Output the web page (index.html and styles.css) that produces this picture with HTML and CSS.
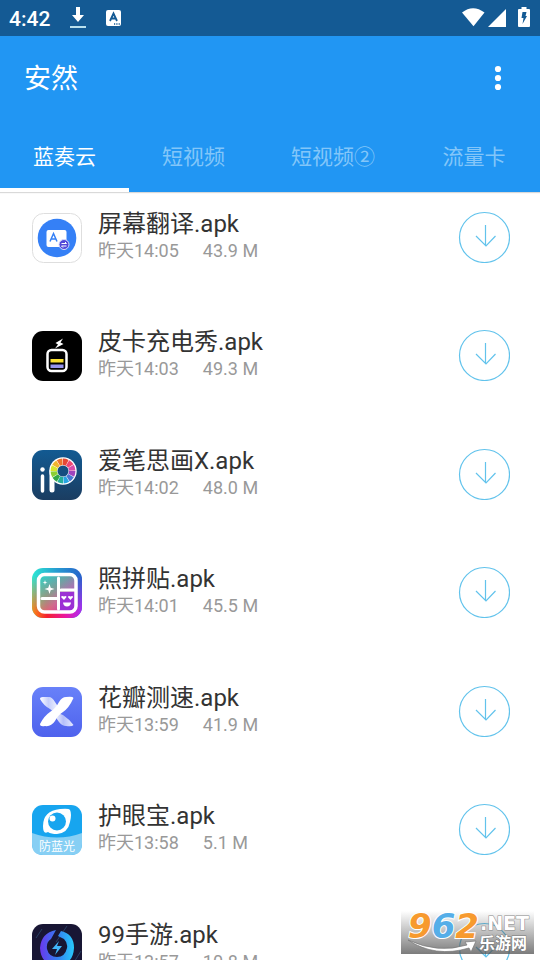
FILE: index.html
```html
<!DOCTYPE html>
<html lang="zh-CN">
<head>
<meta charset="utf-8">
<meta name="viewport" content="width=device-width, initial-scale=1">
<title>安然</title>
<link rel="stylesheet" href="styles.css">
</head>
<body>
<svg class="defs" aria-hidden="true">
  <symbol id="download" viewBox="0 0 52 52">
    <circle cx="26.500" cy="26.500" r="25" fill="none" stroke="#62c3ec" stroke-width="1.2"/>
    <path d="M27.500 14V34.500M18 25L28 35L37.500 25" fill="none" stroke="#62c3ec" stroke-width="1.200"/>
  </symbol>
</svg>
<div class="status">
  <div class="status-group">
    <span class="clock">4:42</span>
    <svg width="16" height="22" viewBox="0 0 16 22"><path d="M6 0h4v8h4l-6 7-6-7h4z" fill="#fff"/><path d="M0 19h16v2H0z" fill="#b9e0ee"/></svg>
    <svg width="16" height="16" viewBox="0 0 16 16"><rect width="15" height="16" rx="2" fill="#fff"/><path d="M4 11L7.500 3.500L11 11M5.300 8.500h4.500" fill="none" stroke="#145a94" stroke-width="1.800"/><path d="M8 14h1.200M10.300 14h1.200M12.600 14h1.200" stroke="#145a94" stroke-width="1.300"/></svg>
  </div>
  <div class="status-group status-right">
    <svg width="44" height="20" viewBox="0 0 44 20"><path d="M0 5.500Q11-3 22.500 5.500L11.500 19.300Z" fill="#fff"/><path d="M44 2V20H26z" fill="#fff"/></svg>
    <svg width="12" height="20" viewBox="0 0 12 20"><path d="M3.500 0h5v2H11q1 0 1 1v16q0 1-1 1H1q-1 0-1-1V3q0-1 1-1h2.500z" fill="#fff"/><path d="M4.500 5h4L7.500 9H9l-4.500 8 1-6H3.500z" fill="#145a94"/></svg>
  </div>
</div>
<header class="appbar">
  <div class="toolbar">
    <h1>安然</h1>
    <button class="more" type="button" aria-label="更多"><svg width="8" height="26" viewBox="0 0 8 26" fill="#fff"><circle cx="4" cy="4" r="3.100"/><circle cx="4" cy="13" r="3.100"/><circle cx="4" cy="22" r="3.100"/></svg></button>
  </div>
  <nav class="tabs">
    <a class="tab active" href="#">蓝奏云</a>
    <a class="tab" href="#">短视频</a>
    <a class="tab" href="#">短视频②</a>
    <a class="tab" href="#">流量卡</a>
  </nav>
</header>
<main class="content">
<ul class="files">
  <li class="file">
    <svg class="icon" viewBox="0 0 50 50"><rect x=".5" y=".5" width="49" height="49" rx="11" fill="#fff" stroke="#dedede"/><circle cx="25" cy="25" r="19.300" fill="#3580f6"/><rect x="14.500" y="17" width="20" height="17" rx="2" fill="#fff"/><path d="M18 28.500L21.500 20.500L25 28.500M19.200 26h4.600" fill="none" stroke="#3580f6" stroke-width="1.500"/><circle cx="32" cy="31.500" r="5" fill="#5148d8" stroke="#d8dcff"/><path d="M29.500 30.500h5l-1.500-1.500M34.500 33h-5l1.500 1.500" fill="none" stroke="#fff"/></svg>
    <div class="info"><h2>屏幕翻译.apk</h2><p><span>昨天14:05</span><span>43.9 M</span></p></div>
    <button class="get" type="button" aria-label="下载"><svg><use href="#download"/></svg></button>
  </li>
  <li class="file">
    <svg class="icon" viewBox="0 0 50 50"><rect width="50" height="50" rx="11" fill="#000"/><path d="M31 7.500L23.500 12L26 13.500L23 17.500L31.500 13L28.500 11.500Z" fill="#fff"/><rect x="15.500" y="19" width="19" height="21" rx="4" fill="none" stroke="#fff" stroke-width="2.500"/><path d="M18.500 28h13v3.500h-13z" fill="#f9df31"/><path d="M18.500 33.500h13V37h-13z" fill="#9694ef"/></svg>
    <div class="info"><h2>皮卡充电秀.apk</h2><p><span>昨天14:03</span><span>49.3 M</span></p></div>
    <button class="get" type="button" aria-label="下载"><svg><use href="#download"/></svg></button>
  </li>
  <li class="file">
    <svg class="icon" viewBox="0 0 50 50"><defs><linearGradient id="ink" x2="0" y2="1"><stop stop-color="#125a92"/><stop offset="1" stop-color="#1b3d61"/></linearGradient></defs><rect width="50" height="50" rx="11" fill="url(#ink)"/><path d="M10.500 26V41" stroke="#fff" stroke-width="3.500" stroke-linecap="round"/><path d="M20 21V40" stroke="#fff" stroke-width="5" stroke-linecap="round"/><circle cx="10.500" cy="19.500" r="2.200" fill="#fff"/><circle cx="31" cy="21" r="13.700" fill="#fff"/>
      <g fill="none" stroke-width="6.500" transform="rotate(-90 31 21)"><circle cx="31" cy="21" r="9.200" stroke="#e64835" pathLength="12" stroke-dasharray=".9 11.1"/><circle cx="31" cy="21" r="9.200" stroke="#ee4773" pathLength="12" stroke-dasharray=".9 11.1" stroke-dashoffset="-1"/><circle cx="31" cy="21" r="9.200" stroke="#d94ba9" pathLength="12" stroke-dasharray=".9 11.1" stroke-dashoffset="-2"/><circle cx="31" cy="21" r="9.200" stroke="#9e45bd" pathLength="12" stroke-dasharray=".9 11.1" stroke-dashoffset="-3"/><circle cx="31" cy="21" r="9.200" stroke="#4876d2" pathLength="12" stroke-dasharray=".9 11.1" stroke-dashoffset="-4"/><circle cx="31" cy="21" r="9.200" stroke="#26a5e2" pathLength="12" stroke-dasharray=".9 11.1" stroke-dashoffset="-5"/><circle cx="31" cy="21" r="9.200" stroke="#26af9b" pathLength="12" stroke-dasharray=".9 11.1" stroke-dashoffset="-6"/><circle cx="31" cy="21" r="9.200" stroke="#32a845" pathLength="12" stroke-dasharray=".9 11.1" stroke-dashoffset="-7"/><circle cx="31" cy="21" r="9.200" stroke="#8bcf35" pathLength="12" stroke-dasharray=".9 11.1" stroke-dashoffset="-8"/><circle cx="31" cy="21" r="9.200" stroke="#d8e62d" pathLength="12" stroke-dasharray=".9 11.1" stroke-dashoffset="-9"/><circle cx="31" cy="21" r="9.200" stroke="#f1b52d" pathLength="12" stroke-dasharray=".9 11.1" stroke-dashoffset="-10"/><circle cx="31" cy="21" r="9.200" stroke="#ed742d" pathLength="12" stroke-dasharray=".9 11.1" stroke-dashoffset="-11"/></g><circle cx="31" cy="21" r="5.500" fill="#154e80"/></svg>
    <div class="info"><h2>爱笔思画X.apk</h2><p><span>昨天14:02</span><span>48.0 M</span></p></div>
    <button class="get" type="button" aria-label="下载"><svg><use href="#download"/></svg></button>
  </li>
  <li class="file">
    <svg class="icon" viewBox="0 0 50 50"><defs><linearGradient id="top" x2="1"><stop stop-color="#2ce8d3"/><stop offset=".5" stop-color="#279bd1"/><stop offset="1" stop-color="#2662ca"/></linearGradient><linearGradient id="base" x2="1"><stop stop-color="#ff8b13"/><stop offset=".3" stop-color="#f32130"/><stop offset=".65" stop-color="#eb169b"/><stop offset="1" stop-color="#b12af5"/></linearGradient><linearGradient id="tile" x2="1" y2="1"><stop stop-color="#25d9cc"/><stop offset=".4" stop-color="#8fb98d"/><stop offset=".6" stop-color="#d98aa0"/><stop offset="1" stop-color="#a52bd4"/></linearGradient><linearGradient id="fade" x2="0" y2="1"><stop offset=".15" stop-color="#000"/><stop offset=".9" stop-color="#fff"/></linearGradient><mask id="low"><rect width="50" height="50" fill="url(#fade)"/></mask></defs><rect width="50" height="50" rx="11" fill="url(#top)"/><rect width="50" height="50" rx="11" fill="url(#base)" mask="url(#low)"/><rect x="7" y="7" width="37" height="37" rx="6" fill="url(#tile)" opacity=".6"/><path d="M27 24h16v17q0 3-3 3H27z" fill="#9c30d4"/><rect x="6.500" y="6.500" width="37.500" height="37.500" rx="6" fill="none" stroke="#fff" stroke-width="3.500"/><path d="M26.500 10V41M10 30.500H26M29 22h14" stroke="#fff" stroke-width="3" stroke-linecap="round"/><path d="M17.500 16l1.200 3.800 3.800 1.200-3.800 1.200-1.200 3.800-1.200-3.800-3.800-1.200 3.800-1.200zM13 12l.6 1.900 1.900.6-1.900.6-.6 1.900-.6-1.900-1.900-.6 1.900-.6z" fill="#fff"/><path d="M32 32l-3-3q1-2 3-.4 2-1.500 2.600.4zM38.500 32l-2.700-3q1-2 2.700-.4 2-1.500 2.600.4zM31 34.500h8q-.5 4-4 4T31 34.500z" fill="#fff"/></svg>
    <div class="info"><h2>照拼贴.apk</h2><p><span>昨天14:01</span><span>45.5 M</span></p></div>
    <button class="get" type="button" aria-label="下载"><svg><use href="#download"/></svg></button>
  </li>
  <li class="file">
    <svg class="icon" viewBox="0 0 50 50"><defs><linearGradient id="blue" x2="0" y2="1"><stop stop-color="#6881f9"/><stop offset="1" stop-color="#4e62ed"/></linearGradient><linearGradient id="leaf1"><stop stop-color="#fff"/><stop offset=".4" stop-color="#c5cefc"/><stop offset="1" stop-color="#fff"/></linearGradient><linearGradient id="leaf2"><stop stop-color="#fff"/><stop offset=".5" stop-color="#b4bffa"/><stop offset="1" stop-color="#e4e8ff"/></linearGradient></defs><rect width="50" height="50" rx="11" fill="url(#blue)"/><path d="M8 12Q8 9.500 12 10H17Q20 10 23 15Q25 19 29 22Q23 27 18 22Q12 19 8 12Z" fill="url(#leaf1)"/><path d="M21 28Q26 25 31 28Q37 32 41.500 38Q40 40 34 39Q30 39 27 35Q25 31 21 28Z" fill="url(#leaf2)"/><path d="M41.500 11Q41 9 34 10Q30 10 27 15Q24 21 18 25Q12 29 8 37Q8 40 13 39Q19 40 23 34Q26 28 31 25Q37 21 41.500 11Z" fill="#fff"/></svg>
    <div class="info"><h2>花瓣测速.apk</h2><p><span>昨天13:59</span><span>41.9 M</span></p></div>
    <button class="get" type="button" aria-label="下载"><svg><use href="#download"/></svg></button>
  </li>
  <li class="file">
    <svg class="icon" viewBox="0 0 50 50"><rect width="50" height="50" rx="11" fill="#17a5ef"/><path d="M0 28Q25 37 50 28V39Q50 50 39 50H11Q0 50 0 39Z" fill="#87cff4"/><path d="M11 21Q11 6 28 4Q37 3 38 5Q40 9 38 17Q36 28 25 29Q19 29 16 27Q11 30 11 21Z" fill="#fff"/><circle cx="25" cy="16.500" r="9" fill="#17a5ef"/><circle cx="20.500" cy="13.500" r="3" fill="#fff"/><text class="badge" x="25" y="46" text-anchor="middle">防蓝光</text></svg>
    <div class="info"><h2>护眼宝.apk</h2><p><span>昨天13:58</span><span>5.1 M</span></p></div>
    <button class="get" type="button" aria-label="下载"><svg><use href="#download"/></svg></button>
  </li>
  <li class="file">
    <svg class="icon" viewBox="0 0 50 50"><defs><linearGradient id="ring"><stop stop-color="#6a37ed"/><stop offset=".5" stop-color="#347df2"/><stop offset="1" stop-color="#27c9fa"/></linearGradient></defs><rect width="50" height="50" rx="11" fill="#181634"/><path d="M35 2L24 18M49 27L39 43M10 5L4 14" stroke="#284063"/><path d="M24 6L19 15Q14 18 15 25Q17 33 25 33T35 24Q36 19 32 15L26 12L29 7Q42 10 42 24Q41 41 25 41T8 24Q9 9 24 6Z" fill="url(#ring)"/><path d="M27 17L20 25h5l-2 6 7-9h-5z" fill="#41b5fa"/></svg>
    <div class="info"><h2>99手游.apk</h2><p><span>昨天13:57</span><span>10.8 M</span></p></div>
    <button class="get" type="button" aria-label="下载"><svg><use href="#download"/></svg></button>
  </li>
</ul>
</main>
<div class="watermark">
  <svg width="133" height="43" viewBox="0 0 133 43">
    <text class="mark-digits" x="7" y="27"><tspan>9</tspan><tspan class="mark-blue">6</tspan><tspan>2</tspan></text>
    <path d="M7 29Q37 43 66 34L64 31L75 30L70 41L68 37Q34 47 7 29Z" fill="#fff" stroke="#777" stroke-width=".7"/>
    <text class="mark-net" x="79" y="19">.NET</text>
    <text class="mark-name" x="78" y="38">乐游网</text>
  </svg>
</div>
</body>
</html>
```
FILE: styles.css
```css
* { box-sizing: border-box; }
body {
  margin: 0;
  height: 100vh;
  display: flex;
  flex-direction: column;
  overflow: hidden;
  background: #fff;
  font-family: Roboto, "Noto Sans CJK SC", sans-serif;
}
h1, h2, p, ul { margin: 0; padding: 0; font-weight: 400; }
button { padding: 0; border: 0; background: none; }
svg { display: block; }
.defs { position: absolute; width: 0; height: 0; }
.status {
  flex: none;
  display: flex;
  justify-content: space-between;
  height: 36px;
  padding: 0 10px 0 9px;
  background: #145a94;
  color: #fff;
}
.status-group { display: flex; align-items: center; gap: 20px; }
.status-right { gap: 12px; padding-bottom: 2px; }
.clock { font-size: 21px; font-weight: 500; line-height: 34px; padding-top: 2px; }
.appbar { flex: none; background: #2196f3; box-shadow: 0 1px 1px rgba(0, 0, 0, .15); }
.toolbar {
  display: flex;
  align-items: center;
  justify-content: space-between;
  height: 84px;
  padding: 0 38px 0 24px;
}
h1 { color: #fff; font-size: 27px; line-height: 36px; padding-top: 2px; }
.tabs { display: flex; height: 72px; }
.tab {
  padding: 0 33px;
  border-bottom: 4px solid transparent;
  color: #83c6f9;
  font-size: 21px;
  line-height: 74px;
  text-decoration: none;
  white-space: nowrap;
}
.tab:last-child { flex: 1; text-align: center; padding: 0; }
.tab.active { color: #fff; border-color: #fff; }
.content { flex: 1; min-height: 0; overflow: hidden; }
.files { list-style: none; padding-top: 17px; }
.file {
  display: flex;
  align-items: flex-start;
  height: 118px;
  padding: 0 30px 0 32px;
}
.file:nth-child(even) { height: 119px; }
.icon { flex: none; width: 50px; height: 50px; margin-top: 4px; }
.info { flex: 1; min-width: 0; padding-left: 16px; }
h2 { color: #333; font-size: 24px; line-height: 30px; }
.info p { display: flex; gap: 24px; color: #999; font-size: 18px; line-height: 24px; }
.get { flex: none; margin-top: 2px; }
.get svg { width: 52px; height: 52px; }
.badge { fill: #fff; font-size: 12px; }
.watermark {
  position: absolute;
  right: 6px;
  bottom: 6px;
  background: linear-gradient(rgba(80, 80, 80, 0), rgba(80, 80, 80, .75));
}
.mark-digits { font: italic 700 34px "DejaVu Sans", sans-serif; fill: #f79a2e; stroke: #fff; stroke-width: 2px; paint-order: stroke; }
.mark-blue { fill: #55aee8; }
.mark-net { font: 700 19px "DejaVu Sans", sans-serif; fill: #fff; stroke: #888; stroke-width: 1px; paint-order: stroke; }
.mark-name { font: 700 16px "Noto Sans CJK SC", sans-serif; fill: #fff; stroke: #777; stroke-width: 1px; paint-order: stroke; }
```
